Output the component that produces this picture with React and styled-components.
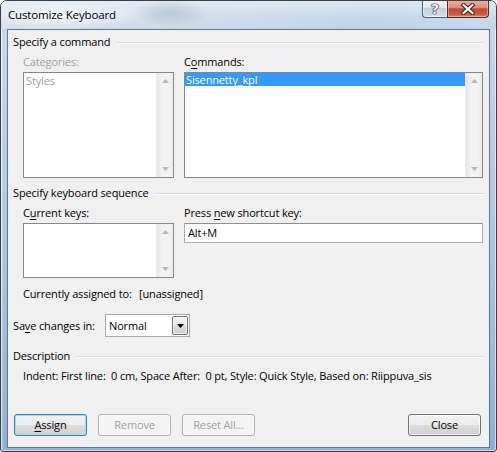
import React from 'react';
import styled, { createGlobalStyle } from 'styled-components';

const Global = createGlobalStyle`
  html, body { margin: 0; padding: 0; background: #fff; }
  body {
    width: 497px; height: 452px; overflow: hidden;
    font-family: "Open Sans", "Noto Sans", sans-serif;
    font-size: 11px;
    letter-spacing: -0.15px;
    color: #000;
  }
  #root { width: 497px; height: 452px; }
`;

const Window = styled.div`
  width: 497px;
  height: 452px;
  box-sizing: border-box;
  border: 1px solid #34404c;
  border-radius: 7px 7px 3px 3px;
  overflow: hidden;
  display: flex;
  flex-direction: column;
  background:
    linear-gradient(90deg, rgba(255,255,255,0.35) 0px, rgba(255,255,255,0) 3px, rgba(255,255,255,0) 494px),
    linear-gradient(180deg, #c9d9ea 0%, #a9c3de 60%, #8fb0d3 100%);
  box-shadow: inset 0 0 0 1px rgba(255,255,255,0.55);
`;

const TitleBar = styled.div`
  height: 28px;
  flex: none;
  display: flex;
  align-items: flex-start;
  justify-content: space-between;
  padding-left: 7px;
  background:
    radial-gradient(ellipse 90px 14px at 60px 14px, rgba(255,255,255,0.75), rgba(255,255,255,0) 100%),
    radial-gradient(ellipse 40px 14px at 170px 12px, rgba(120,140,165,0.3), rgba(120,140,165,0) 100%),
    linear-gradient(180deg, rgba(255,255,255,0.45) 0%, rgba(255,255,255,0.1) 60%, rgba(255,255,255,0) 100%),
    linear-gradient(90deg, #d5e0eb 0%, #cad9e8 45%, #bed3e7 75%, #c3d8ec 100%);
`;

const Title = styled.div`
  align-self: center;
  font-size: 11.5px;
  line-height: 16px;
  color: #000;
`;

const Caption = styled.div`
  display: flex;
  margin-right: 7px;
  margin-top: -1px;
`;

const HelpButton = styled.div`
  width: 25px;
  height: 18px;
  box-sizing: border-box;
  border: 1px solid #4e5e70;
  border-top: none;
  border-right: none;
  border-radius: 0 0 0 4px;
  background: linear-gradient(180deg, #f1f4f7 0%, #dfe6ee 45%, #c6d1dc 50%, #d4dee8 100%);
  box-shadow: inset 0 0 0 1px rgba(255,255,255,0.6);
  display: flex;
  align-items: center;
  justify-content: center;
  font-family: "DejaVu Sans", sans-serif;
  font-weight: bold;
  font-size: 14px;
  line-height: 14px;
  letter-spacing: 0;
  color: #eef2f6;
  text-shadow: 0 0 1px #2a3440, 0 0 1px #2a3440, 0 0 1px #2a3440, 0 0 1px #2a3440;
`;

const CloseButton = styled.div`
  width: 42px;
  height: 18px;
  box-sizing: border-box;
  border: 1px solid #4b2e2a;
  border-top: none;
  border-radius: 0 0 4px 0;
  background: linear-gradient(180deg, #e9b2a4 0%, #dc8d7b 45%, #c5462f 52%, #cf5a3f 85%, #e1896d 100%);
  box-shadow: inset 0 0 0 1px rgba(255,220,210,0.45);
  display: flex;
  align-items: center;
  justify-content: center;
`;

const Client = styled.div`
  flex: 1;
  margin: 0 6px 3px 6px;
  border: 1px solid #5b7895;
  background: #f0f0f0;
  display: flex;
  flex-direction: column;
  padding: 0 6px 11px 5px;
  min-height: 0;
`;

const GroupHeader = styled.div`
  display: flex;
  align-items: center;
  line-height: 16px;
  height: 16px;
  margin-top: ${p => p.$top}px;
  margin-right: -1px;
  white-space: nowrap;
  &::after {
    content: "";
    flex: 1;
    height: 1px;
    margin-left: 6px;
    background: #d8dde2;
    box-shadow: 0 1px 0 #fbfbfb;
  }
`;

const Columns = styled.div`
  display: flex;
  gap: 10px;
  margin-top: 4px;
  padding-left: 10px;
  align-items: flex-start;
`;

const Field = styled.div`
  width: ${p => p.$w}px;
  display: flex;
  flex-direction: column;
`;

const Label = styled.div`
  line-height: 16px;
  height: 16px;
  margin-bottom: 2px;
  white-space: nowrap;
  color: ${p => (p.$disabled ? '#a0a0a0' : '#000')};
  u { text-decoration-thickness: 1px; text-underline-offset: 2px; }
`;

const ListBox = styled.div`
  height: ${p => p.$h}px;
  box-sizing: border-box;
  border: 1px solid #828790;
  background: #fff;
  display: flex;
`;

const ListItems = styled.div`
  flex: 1;
  min-width: 0;
`;

const Item = styled.div`
  height: 13px;
  line-height: 13px;
  padding-left: ${p => (p.$selected ? 1 : 2)}px;
  margin-top: ${p => (p.$selected ? 0 : 1)}px;
  color: ${p => (p.$selected ? '#fff' : p.$disabled ? '#a0a0a0' : '#000')};
  background: ${p => (p.$selected ? '#3399ff' : 'transparent')};
  white-space: nowrap;
`;

const ScrollBar = styled.div`
  width: 17px;
  flex: none;
  background: linear-gradient(90deg, #e6e6e6 0%, #f3f3f3 30%, #f3f3f3 70%, #ececec 100%);
  border-left: 1px solid #ececec;
  display: flex;
  flex-direction: column;
  justify-content: space-between;
  align-items: center;
  padding: 6px 0 6px;
  box-sizing: border-box;
`;

const Arrow = ({ down, color = '#b9b9b9' }) => (
  <svg width="7" height="4" viewBox="0 0 7 4">
    {down ? (
      <path d="M0 0 H7 L3.5 4 Z" fill={color} />
    ) : (
      <path d="M0 4 H7 L3.5 0 Z" fill={color} />
    )}
  </svg>
);

const TextInput = styled.div`
  height: 20px;
  box-sizing: border-box;
  border: 1px solid #abadb3;
  border-top-color: #8e8f8f;
  background: #fff;
  line-height: 18px;
  padding-left: 3px;
`;

const Row = styled.div`
  display: flex;
  align-items: center;
  margin-top: ${p => p.$top}px;
  padding-left: ${p => p.$indent || 0}px;
  line-height: 16px;
  white-space: nowrap;
  u { text-decoration-thickness: 1px; text-underline-offset: 2px; }
`;

const FixedLabel = styled.span`
  display: inline-block;
  width: ${p => p.$w}px;
  flex: none;
`;

const Combo = styled.div`
  width: 85px;
  height: 23px;
  box-sizing: border-box;
  border: 1px solid #a5acb5;
  background: #fff;
  display: flex;
  align-items: center;
  padding: 1px;
`;

const ComboText = styled.div`
  flex: 1;
  padding-left: 2px;
`;

const ComboButton = styled.div`
  width: 16px;
  height: 19px;
  box-sizing: border-box;
  border: 1px solid #707070;
  border-radius: 2px;
  background: linear-gradient(180deg, #f2f2f2 0%, #ebebeb 48%, #dcdcdc 52%, #cfcfcf 100%);
  box-shadow: inset 0 0 0 1px rgba(255,255,255,0.7);
  display: flex;
  align-items: center;
  justify-content: center;
`;

const ButtonRow = styled.div`
  margin-top: auto;
  display: flex;
  gap: 11px;
  padding-left: 1px;
  margin-right: 2px;
`;

const Spacer = styled.div`
  flex: 1;
`;

const Button = styled.div`
  width: 73px;
  height: 22px;
  box-sizing: border-box;
  border-radius: 3px;
  display: flex;
  align-items: center;
  justify-content: center;
  line-height: 16px;
  border: 1px solid ${p => (p.$default ? '#3c7fb1' : p.$disabled ? '#adb2b5' : '#707070')};
  color: ${p => (p.$disabled ? '#a0a0a0' : '#000')};
  background: ${p =>
    p.$disabled
      ? '#f4f4f4'
      : 'linear-gradient(180deg, #f2f2f2 0%, #ebebeb 48%, #dddddd 52%, #cfcfcf 100%)'};
  box-shadow: ${p =>
    p.$default
      ? 'inset 0 0 0 1px #9fe0f7'
      : p.$disabled
      ? 'inset 0 0 0 1px #fbfbfb'
      : 'inset 0 0 0 1px rgba(255,255,255,0.75)'};
  u { text-decoration-thickness: 1px; text-underline-offset: 2px; }
`;

export default function App() {
  return (
    <>
      <Global />
      <Window>
        <TitleBar>
          <Title>Customize Keyboard</Title>
          <Caption>
            <HelpButton>?</HelpButton>
            <CloseButton>
              <svg width="16" height="12" viewBox="0 0 16 12">
                <path d="M3.5 2 L12.5 10 M12.5 2 L3.5 10" stroke="#4a2320" strokeWidth="4.2" strokeLinecap="square" />
                <path d="M3.5 2 L12.5 10 M12.5 2 L3.5 10" stroke="#ffffff" strokeWidth="2.2" strokeLinecap="square" />
              </svg>
            </CloseButton>
          </Caption>
        </TitleBar>
        <Client>
          <GroupHeader $top={4}>Specify a command</GroupHeader>
          <Columns>
            <Field $w={151}>
              <Label $disabled>Categories:</Label>
              <ListBox $h={106}>
                <ListItems>
                  <Item $disabled>Styles</Item>
                </ListItems>
                <ScrollBar>
                  <Arrow />
                  <Arrow down />
                </ScrollBar>
              </ListBox>
            </Field>
            <Field $w={299}>
              <Label>
                C<u>o</u>mmands:
              </Label>
              <ListBox $h={106}>
                <ListItems>
                  <Item $selected>Sisennetty_kpl</Item>
                </ListItems>
                <ScrollBar>
                  <Arrow />
                  <Arrow down />
                </ScrollBar>
              </ListBox>
            </Field>
          </Columns>

          <GroupHeader $top={7}>Specify keyboard sequence</GroupHeader>
          <Columns>
            <Field $w={151}>
              <Label>
                C<u>u</u>rrent keys:
              </Label>
              <ListBox $h={55}>
                <ListItems />
                <ScrollBar>
                  <Arrow />
                  <Arrow down />
                </ScrollBar>
              </ListBox>
            </Field>
            <Field $w={299}>
              <Label>
                Press <u>n</u>ew shortcut key:
              </Label>
              <TextInput>Alt+M</TextInput>
            </Field>
          </Columns>
          <Row $top={8} $indent={10}>
            <FixedLabel $w={116}>Currently assigned to:</FixedLabel>
            <span>[unassigned]</span>
          </Row>

          <Row $top={12}>
            <FixedLabel $w={92}>
              Sa<u>v</u>e changes in:
            </FixedLabel>
            <Combo>
              <ComboText>Normal</ComboText>
              <ComboButton>
                <Arrow down color="#000" />
              </ComboButton>
            </Combo>
          </Row>

          <GroupHeader $top={11}>Description</GroupHeader>
          <Row $top={4} $indent={10}>
            Indent: First line:&nbsp; 0 cm, Space After:&nbsp; 0 pt, Style: Quick Style, Based on: Riippuva_sis
          </Row>

          <ButtonRow>
            <Button $default>
              <span>
                <u>A</u>ssign
              </span>
            </Button>
            <Button $disabled>Remove</Button>
            <Button $disabled>Reset All...</Button>
            <Spacer />
            <Button>Close</Button>
          </ButtonRow>
        </Client>
      </Window>
    </>
  );
}
